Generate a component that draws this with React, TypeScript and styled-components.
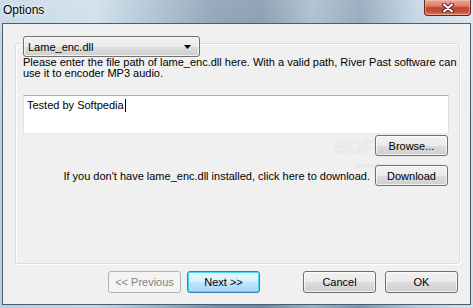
import React from 'react';
import styled, { createGlobalStyle, css } from 'styled-components';

const GlobalStyle = createGlobalStyle`
  html, body {
    margin: 0;
    padding: 0;
    overflow: hidden;
    background: #8aa3b8;
  }
  * {
    box-sizing: border-box;
  }
`;

type Variant = 'normal' | 'default' | 'disabled';

const App: React.FC = () => {
  return (
    <>
      <GlobalStyle />
      <Window>
        <TitleBar>
          <Title>Options</Title>
          <CloseButton>
            <svg width="14" height="10" viewBox="0 0 14 10">
              <path d="M3 1.5 L11 8.5 M11 1.5 L3 8.5" stroke="#4a2a24" strokeWidth="4" strokeLinecap="round" />
              <path d="M3 1.5 L11 8.5 M11 1.5 L3 8.5" stroke="#ffffff" strokeWidth="2" strokeLinecap="round" />
            </svg>
          </CloseButton>
        </TitleBar>
        <Client>
          <GroupBox>
            <Combo>
              <span>Lame_enc.dll</span>
              <svg width="7" height="4" viewBox="0 0 7 4">
                <path d="M0 0 H7 L3.5 4 Z" fill="#000" />
              </svg>
            </Combo>
            <Description>
              Please enter the file path of lame_enc.dll here. With a valid path, River Past software can
              <br />
              use it to encoder MP3 audio.
            </Description>
            <PathBox>
              Tested by Softpedia<Caret />
            </PathBox>
            <BrowseRow>
              <Button>Browse...</Button>
            </BrowseRow>
            <DownloadRow>
              <Hint>If you don't have lame_enc.dll installed, click here to download.</Hint>
              <Button>Download</Button>
            </DownloadRow>
            <Watermark>
              SOFTPEDIA
              <small>www.softpedia.com</small>
            </Watermark>
          </GroupBox>
          <Footer>
            <NavGroup>
              <Button $variant="disabled">&lt;&lt; Previous</Button>
              <Button $variant="default">Next &gt;&gt;</Button>
            </NavGroup>
            <NavGroup $gap={9}>
              <Button>Cancel</Button>
              <Button>OK</Button>
            </NavGroup>
          </Footer>
        </Client>
      </Window>
    </>
  );
};

const Window = styled.div`
  width: 473px;
  height: 308px;
  display: flex;
  flex-direction: column;
  background:
    linear-gradient(180deg, rgba(255, 255, 255, 0.25), rgba(255, 255, 255, 0) 40%),
    linear-gradient(90deg, #b9d0e2 0%, #c6d9e8 20%, #9fb7cb 32%, #7891a8 45%, #6f889f 55%, #9ab2c6 66%, #7d97ae 76%, #b8cddd 88%, #d3e1ec 100%);
  font-family: 'Liberation Sans', Arial, sans-serif;
  color: #000;
`;

const TitleBar = styled.div`
  height: 23px;
  display: flex;
  justify-content: space-between;
  align-items: flex-start;
  padding: 0 2px 0 3px;
`;

const Title = styled.div`
  font-size: 12px;
  line-height: 12px;
  padding-top: 4px;
  color: #000;
  text-shadow: 0 0 6px rgba(255, 255, 255, 0.9), 0 0 3px rgba(255, 255, 255, 0.9);
`;

const CloseButton = styled.div`
  width: 47px;
  height: 16px;
  display: flex;
  align-items: center;
  justify-content: center;
  border: 1px solid #5c2a22;
  border-top: none;
  border-radius: 0 0 4px 4px;
  background: linear-gradient(180deg, #e9a796 0%, #dc7d68 40%, #c4432b 52%, #c8503a 80%, #e18a70 100%);
  box-shadow: inset 0 0 0 1px rgba(255, 200, 190, 0.5);
`;

const Client = styled.div`
  flex: 1;
  margin: 0 2px 3px 2px;
  border: 1px solid #4f5d6b;
  background: #f0f0f0;
  padding: 19px 10px 0 12px;
  display: flex;
  flex-direction: column;
`;

const GroupBox = styled.div`
  position: relative;
  height: 221px;
  border: 1px solid #d5dfe5;
  border-radius: 3px;
  box-shadow: 1px 1px 0 #ffffff, inset 1px 1px 0 #ffffff;
  padding: 0 10px 0 7px;
  display: flex;
  flex-direction: column;
`;

const buttonFace = css`
  border: 1px solid #707070;
  border-radius: 3px;
  background: linear-gradient(180deg, #f2f2f2 0%, #ebebeb 50%, #dddddd 51%, #cfcfcf 100%);
  box-shadow: inset 0 0 0 1px rgba(255, 255, 255, 0.7);
`;

const Combo = styled.div`
  ${buttonFace};
  width: 177px;
  height: 21px;
  margin-top: -8px;
  padding: 0 8px 0 4px;
  display: flex;
  align-items: center;
  justify-content: space-between;
  font-size: 11px;
  position: relative;
  z-index: 1;
`;

const Description = styled.div`
  font-size: 11px;
  line-height: 11px;
  margin-top: 0;
  white-space: nowrap;
`;

const PathBox = styled.div`
  margin-top: 16px;
  height: 39px;
  width: 426px;
  background: #ffffff;
  border: 1px solid #abadb3;
  border-color: #abadb3 #dbdfe6 #e3e9ef #e2e3ea;
  padding: 3px 3px;
  font-size: 11px;
  line-height: 13px;
  display: flex;
  align-items: flex-start;
`;

const Caret = styled.span`
  display: inline-block;
  width: 1px;
  height: 13px;
  background: #000;
  margin-left: 1px;
`;

const BrowseRow = styled.div`
  display: flex;
  justify-content: flex-end;
  margin-top: 1px;
  padding-right: 1px;
  position: relative;
  z-index: 1;
`;

const DownloadRow = styled.div`
  display: flex;
  justify-content: flex-end;
  align-items: center;
  gap: 5px;
  margin-top: 9px;
  padding-right: 1px;
  position: relative;
  z-index: 1;
`;

const Hint = styled.span`
  font-size: 11px;
  white-space: nowrap;
`;

const Button = styled.div<{ $variant?: Variant }>`
  ${buttonFace};
  width: 73px;
  height: 21px;
  display: flex;
  align-items: center;
  justify-content: center;
  font-size: 11px;
  color: #000;

  ${({ $variant }) =>
    $variant === 'default' &&
    css`
      border-color: #3c7fb1;
      background: linear-gradient(180deg, #eaf6fd 0%, #d9f0fc 50%, #bee6fd 51%, #a7d9f5 100%);
      box-shadow: inset 0 0 0 1px #48d7fb;
    `}

  ${({ $variant }) =>
    $variant === 'disabled' &&
    css`
      border-color: #adb2b5;
      background: #f4f4f4;
      box-shadow: none;
      color: #838383;
    `}
`;

const Watermark = styled.div`
  position: absolute;
  left: 318px;
  top: 92px;
  font-size: 20px;
  font-weight: bold;
  color: rgba(255, 255, 255, 0.5);
  text-shadow: 0 0 1px rgba(150, 150, 150, 0.3);
  pointer-events: none;
  white-space: nowrap;

  small {
    position: absolute;
    left: 22px;
    top: 25px;
    font-size: 8px;
    font-weight: bold;
  }
`;

const Footer = styled.div`
  display: flex;
  justify-content: flex-end;
  gap: 43px;
  margin-top: 7px;
  padding-right: 2px;
`;

const NavGroup = styled.div<{ $gap?: number }>`
  display: flex;
  gap: ${({ $gap }) => $gap ?? 6}px;

  & > div {
    height: 22px;
  }
`;

export default App;
